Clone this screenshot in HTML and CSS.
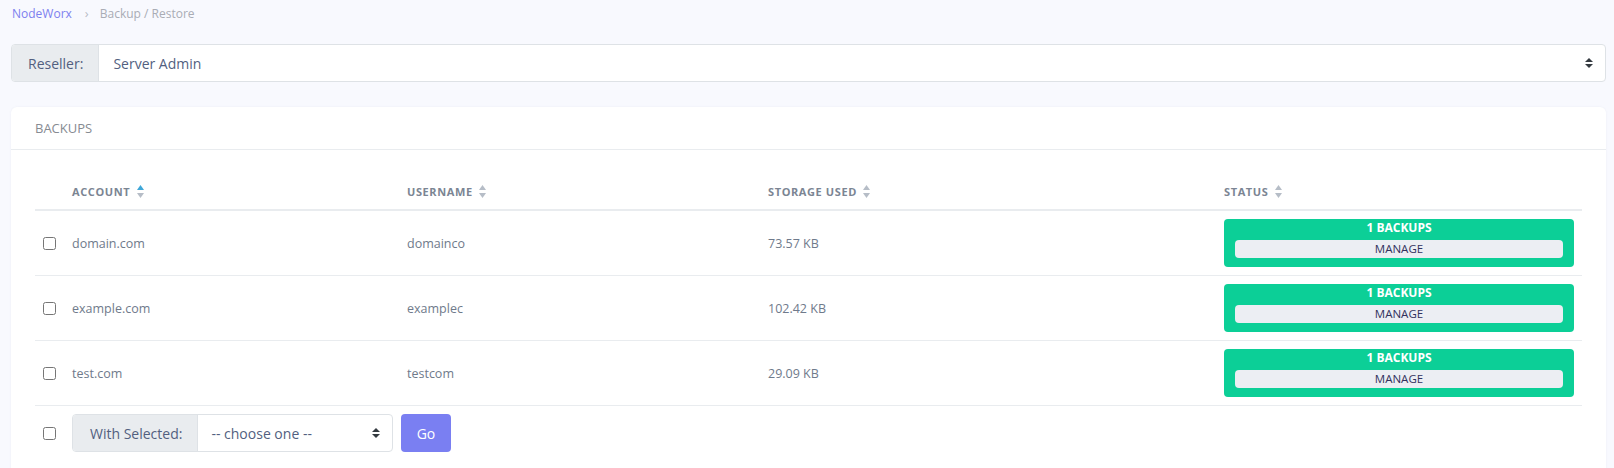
FILE: index.html
```html
<!DOCTYPE html>
<html lang="en">
<head>
    <meta charset="UTF-8">
    <title>Backup / Restore</title>
    <link rel="stylesheet" href="styles.css">
</head>
<body>
    <div class="page">
        <nav class="breadcrumb">
            <a href="#">NodeWorx</a>
            <span class="sep">&rsaquo;</span>
            <span class="current">Backup / Restore</span>
        </nav>

        <div class="input-group reseller">
            <span class="addon">Reseller:</span>
            <div class="select-wrap">
                <select>
                    <option>Server Admin</option>
                </select>
                <svg class="caret" width="8" height="10" viewBox="0 0 4 5"><path d="M2 0L0 2h4zm0 5L0 3h4z" fill="#343a40"/></svg>
            </div>
        </div>

        <div class="card">
            <div class="card-header">Backups</div>
            <div class="card-body">
                <table class="backups">
                    <colgroup>
                        <col style="width:29px">
                        <col style="width:335px">
                        <col style="width:361px">
                        <col style="width:456px">
                        <col>
                    </colgroup>
                    <thead>
                        <tr>
                            <th></th>
                            <th>Account <svg class="sort" width="7" height="13" viewBox="0 0 7 13"><path d="M3.5 0L7 5H0z" fill="#3fa7d8"/><path d="M3.5 13L0 8h7z" fill="#b6bdc7"/></svg></th>
                            <th>Username <svg class="sort" width="7" height="13" viewBox="0 0 7 13"><path d="M3.5 0L7 5H0z" fill="#b6bdc7"/><path d="M3.5 13L0 8h7z" fill="#b6bdc7"/></svg></th>
                            <th>Storage Used <svg class="sort" width="7" height="13" viewBox="0 0 7 13"><path d="M3.5 0L7 5H0z" fill="#b6bdc7"/><path d="M3.5 13L0 8h7z" fill="#b6bdc7"/></svg></th>
                            <th>Status <svg class="sort" width="7" height="13" viewBox="0 0 7 13"><path d="M3.5 0L7 5H0z" fill="#b6bdc7"/><path d="M3.5 13L0 8h7z" fill="#b6bdc7"/></svg></th>
                        </tr>
                    </thead>
                    <tbody>
                        <tr>
                            <td><input type="checkbox"></td>
                            <td>domain.com</td>
                            <td>domainco</td>
                            <td>73.57 KB</td>
                            <td>
                                <div class="status">
                                    <div class="count">1 Backups</div>
                                    <a href="#" class="manage">Manage</a>
                                </div>
                            </td>
                        </tr>
                        <tr>
                            <td><input type="checkbox"></td>
                            <td>example.com</td>
                            <td>examplec</td>
                            <td>102.42 KB</td>
                            <td>
                                <div class="status">
                                    <div class="count">1 Backups</div>
                                    <a href="#" class="manage">Manage</a>
                                </div>
                            </td>
                        </tr>
                        <tr>
                            <td><input type="checkbox"></td>
                            <td>test.com</td>
                            <td>testcom</td>
                            <td>29.09 KB</td>
                            <td>
                                <div class="status">
                                    <div class="count">1 Backups</div>
                                    <a href="#" class="manage">Manage</a>
                                </div>
                            </td>
                        </tr>
                    </tbody>
                    <tfoot>
                        <tr>
                            <td><input type="checkbox"></td>
                            <td colspan="4">
                                <div class="bulk">
                                    <div class="input-group selected">
                                        <span class="addon">With Selected:</span>
                                        <div class="select-wrap">
                                            <select>
                                                <option>-- choose one --</option>
                                            </select>
                                            <svg class="caret" width="8" height="10" viewBox="0 0 4 5"><path d="M2 0L0 2h4zm0 5L0 3h4z" fill="#343a40"/></svg>
                                        </div>
                                    </div>
                                    <button class="btn-go">Go</button>
                                </div>
                            </td>
                        </tr>
                    </tfoot>
                </table>
            </div>
        </div>
    </div>
</body>
</html>
```

FILE: styles.css
```css
body {
    margin: 0;
    background-color: #f8f9fe;
    font-family: "Open Sans", Arial, sans-serif;
    color: #525f7f;
}

.page {
    padding: 0 8px 0 11px;
}

/* breadcrumb */
.breadcrumb {
    height: 26px;
    display: flex;
    align-items: center;
    font-size: 12px;
    padding-left: 1px;
}

.breadcrumb a {
    color: #7d80ef;
    text-decoration: none;
}

.breadcrumb .sep {
    color: #b8bcc6;
    margin: 0 11px 0 13px;
    font-size: 13px;
}

.breadcrumb .current {
    color: #a9acb5;
}

/* input groups */
.input-group {
    display: flex;
    border: 1px solid #dee2e6;
    border-radius: 4px;
    background-color: #fff;
    font-size: 14px;
}

.input-group .addon {
    display: flex;
    align-items: center;
    background-color: #e9ecef;
    color: #525f7f;
    border-right: 1px solid #dee2e6;
    border-radius: 3px 0 0 3px;
}

.select-wrap {
    position: relative;
    flex: 1;
    display: flex;
}

.select-wrap select {
    flex: 1;
    appearance: none;
    -webkit-appearance: none;
    border: none;
    background: transparent;
    font-family: inherit;
    font-size: 14px;
    color: #525f7f;
    outline: none;
}

.select-wrap .caret {
    position: absolute;
    top: 50%;
    right: 12px;
    margin-top: -5px;
    pointer-events: none;
}

.reseller {
    margin-top: 18px;
    height: 36px;
}

.reseller .addon {
    padding: 0 15px 0 16px;
}

.reseller select {
    padding-left: 14px;
}

/* card */
.card {
    margin-top: 25px;
    background-color: #fff;
    border-radius: 6px;
    box-shadow: 0 0 2px rgba(136, 152, 170, 0.12);
}

.card-header {
    height: 42px;
    border-bottom: 1px solid #e9ecef;
    padding: 0 24px;
    display: flex;
    align-items: center;
    text-transform: uppercase;
    font-size: 13px;
    color: #878b92;
}

.card-body {
    padding: 23px 24px 20px;
}

/* table */
.backups {
    width: 100%;
    border-collapse: collapse;
    table-layout: fixed;
    font-size: 12.5px;
    color: #6f7a8b;
}

.backups th {
    text-align: left;
    text-transform: uppercase;
    font-size: 11px;
    font-weight: 700;
    letter-spacing: 0.6px;
    color: #7b8593;
    padding: 11px 8px 10px;
    border-bottom: 2px solid #e9ecef;
    white-space: nowrap;
}

.backups th .sort {
    vertical-align: -2px;
    margin-left: 3px;
}

.backups td {
    padding: 8px;
    vertical-align: middle;
    border-bottom: 1px solid #e9ecef;
}

.backups tfoot td {
    border-bottom: none;
}

.backups input[type="checkbox"] {
    margin: 0;
    width: 13px;
    height: 13px;
    display: block;
}

.status {
    background-color: #0ccf97;
    border-radius: 4px;
    padding: 1px 11px 9px;
    text-align: center;
}

.status .count {
    color: #fff;
    font-size: 12px;
    font-weight: 700;
    line-height: 16px;
    text-transform: uppercase;
    margin-bottom: 4px;
}

.status .manage {
    display: block;
    height: 18px;
    line-height: 18px;
    background-color: #eceef3;
    border-radius: 4px;
    color: #32325d;
    font-size: 11.5px;
    font-weight: 500;
    text-transform: uppercase;
    text-decoration: none;
}

/* bulk actions */
.bulk {
    display: flex;
    gap: 8px;
}

.selected {
    width: 319px;
    height: 36px;
}

.selected .addon {
    padding: 0 15px 0 17px;
}

.selected select {
    padding-left: 13px;
}

.btn-go {
    width: 50px;
    height: 38px;
    border: none;
    border-radius: 4px;
    background-color: #7a7ff2;
    color: #fff;
    font-family: inherit;
    font-size: 14px;
    cursor: pointer;
}
```
